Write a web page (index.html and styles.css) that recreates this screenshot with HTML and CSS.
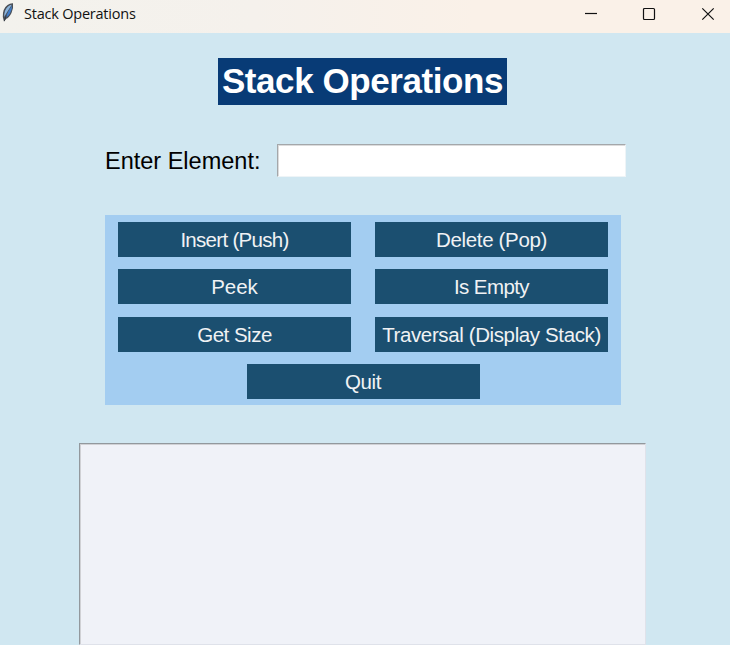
FILE: index.html
```html
<!DOCTYPE html>
<html lang="en">
<head>
<meta charset="utf-8">
<title>Stack Operations</title>
<link rel="stylesheet" href="styles.css">
</head>
<body>
<header class="titlebar">
  <svg class="feather" width="16" height="24" viewBox="0 0 16 24">
    <path d="M4 21.800 2.800 17Q2.500 8.500 7.500 5Q10 3 13 3.200Q13.800 8 11.500 13Q9 18 6 19Z" fill="#4a4f56"/>
    <path d="M4.200 17Q4 10 8 6.500Q10 4.800 11.800 4.700L6.500 13Z" fill="#8bb4dc"/>
    <path d="M5.600 17 8.500 11 12 5.500Q12.500 9 10 13.500Q8 16.800 6 17.500Z" fill="#3f7cc8"/>
    <path d="M4.300 21 6.300 15.500" fill="none" stroke="#343a42" stroke-width="1"/>
  </svg>
  <span class="caption">Stack Operations</span>
  <div class="controls">
    <svg width="14" height="14" viewBox="0 0 14 14"><path d="M2 6.500H14"/></svg>
    <svg width="14" height="14" viewBox="0 0 14 14"><rect x="1.500" y="1.500" width="11" height="11" rx="1"/></svg>
    <svg width="14" height="14" viewBox="0 0 14 14"><path d="M1.300 1.300 12.700 12.700M12.700 1.300 1.300 12.700"/></svg>
  </div>
</header>
<main class="window">
  <h1 class="heading"><span>Stack Operations</span></h1>
  <div class="entry-row">
    <label class="label" for="element">Enter Element:</label>
    <input class="entry" id="element" type="text">
  </div>
  <div class="panel">
    <button class="btn push">Insert (Push)</button>
    <button class="btn pop">Delete (Pop)</button>
    <button class="btn">Peek</button>
    <button class="btn empty">Is Empty</button>
    <button class="btn size">Get Size</button>
    <button class="btn traversal">Traversal (Display Stack)</button>
    <button class="btn quit">Quit</button>
  </div>
  <div class="output"></div>
</main>
</body>
</html>
```
FILE: styles.css
```css
* { box-sizing: border-box; }
body {
  margin: 0;
  width: 730px;
  height: 645px;
  overflow: hidden;
  display: flex;
  flex-direction: column;
  background: #d0e7f1;
  font-family: "Liberation Sans", Arial, sans-serif;
}
.titlebar {
  flex: none;
  height: 33px;
  display: flex;
  background: linear-gradient(90deg, #f3f2ed 0%, #f5f1ec 35%, #faf1e8 65%, #faf1e8 100%);
}
.caption {
  margin: 4px 0 0 8px;
  font: 14.5px/20px "Open Sans", "Noto Sans", sans-serif;
  letter-spacing: -0.22px;
  color: #111;
}
.controls {
  display: flex;
  gap: 45px;
  margin: 7px 15px 0 auto;
}
.controls svg { fill: none; stroke: #111; stroke-width: 1.2; }
.window {
  flex: 1;
  min-height: 0;
  display: flex;
  flex-direction: column;
}
.heading {
  margin: 25px 0 0 218px;
  width: 289px;
  height: 47px;
  background: #083b76;
  color: #fff;
  font-size: 35px;
  line-height: 46px;
  letter-spacing: -0.42px;
  text-align: center;
  white-space: nowrap;
}
.entry-row {
  display: flex;
  margin: 39px 0 0 105px;
  height: 33px;
}
.label {
  width: 172px;
  font-size: 23.5px;
  line-height: 34px;
  white-space: nowrap;
}
.entry {
  width: 349px;
  height: 33px;
  padding: 0 4px;
  border: 1px solid;
  border-color: #a4a7aa #eef4f7 #eef4f7 #a4a7aa;
  background: #fff;
  box-shadow: inset 1px 1px #dcdcdc;
  font: 23px "Liberation Sans", sans-serif;
}
.panel {
  flex: none;
  margin: 38px 0 0 105px;
  width: 516px;
  height: 190px;
  padding: 6.800px 13px 6px;
  display: grid;
  grid-template-columns: 233px 233px;
  grid-auto-rows: 35px;
  gap: 12.500px 24px;
  background: #a3cdf1;
}
.btn {
  border: 0;
  padding: 1px 0 0;
  background: #1b4f70;
  color: #f0f2f4;
  font: 20.5px/34px "Liberation Sans", sans-serif;
  white-space: nowrap;
}
.push { letter-spacing: -0.7px; }
.pop { letter-spacing: -0.33px; }
.empty { letter-spacing: -0.6px; }
.size { letter-spacing: -0.5px; }
.traversal { letter-spacing: -0.38px; }
.quit {
  grid-column: 1 / 3;
  width: 233px;
  justify-self: center;
  letter-spacing: -0.4px;
}
.output {
  flex: none;
  margin: 38px 0 0 79px;
  width: 567px;
  height: 202px;
  border: 1px solid;
  border-color: #92989d #dfe2ea #dfe2ea #92989d;
  background: #f0f2f8;
  box-shadow: inset 1px 1px #d0d1d5;
}
```
